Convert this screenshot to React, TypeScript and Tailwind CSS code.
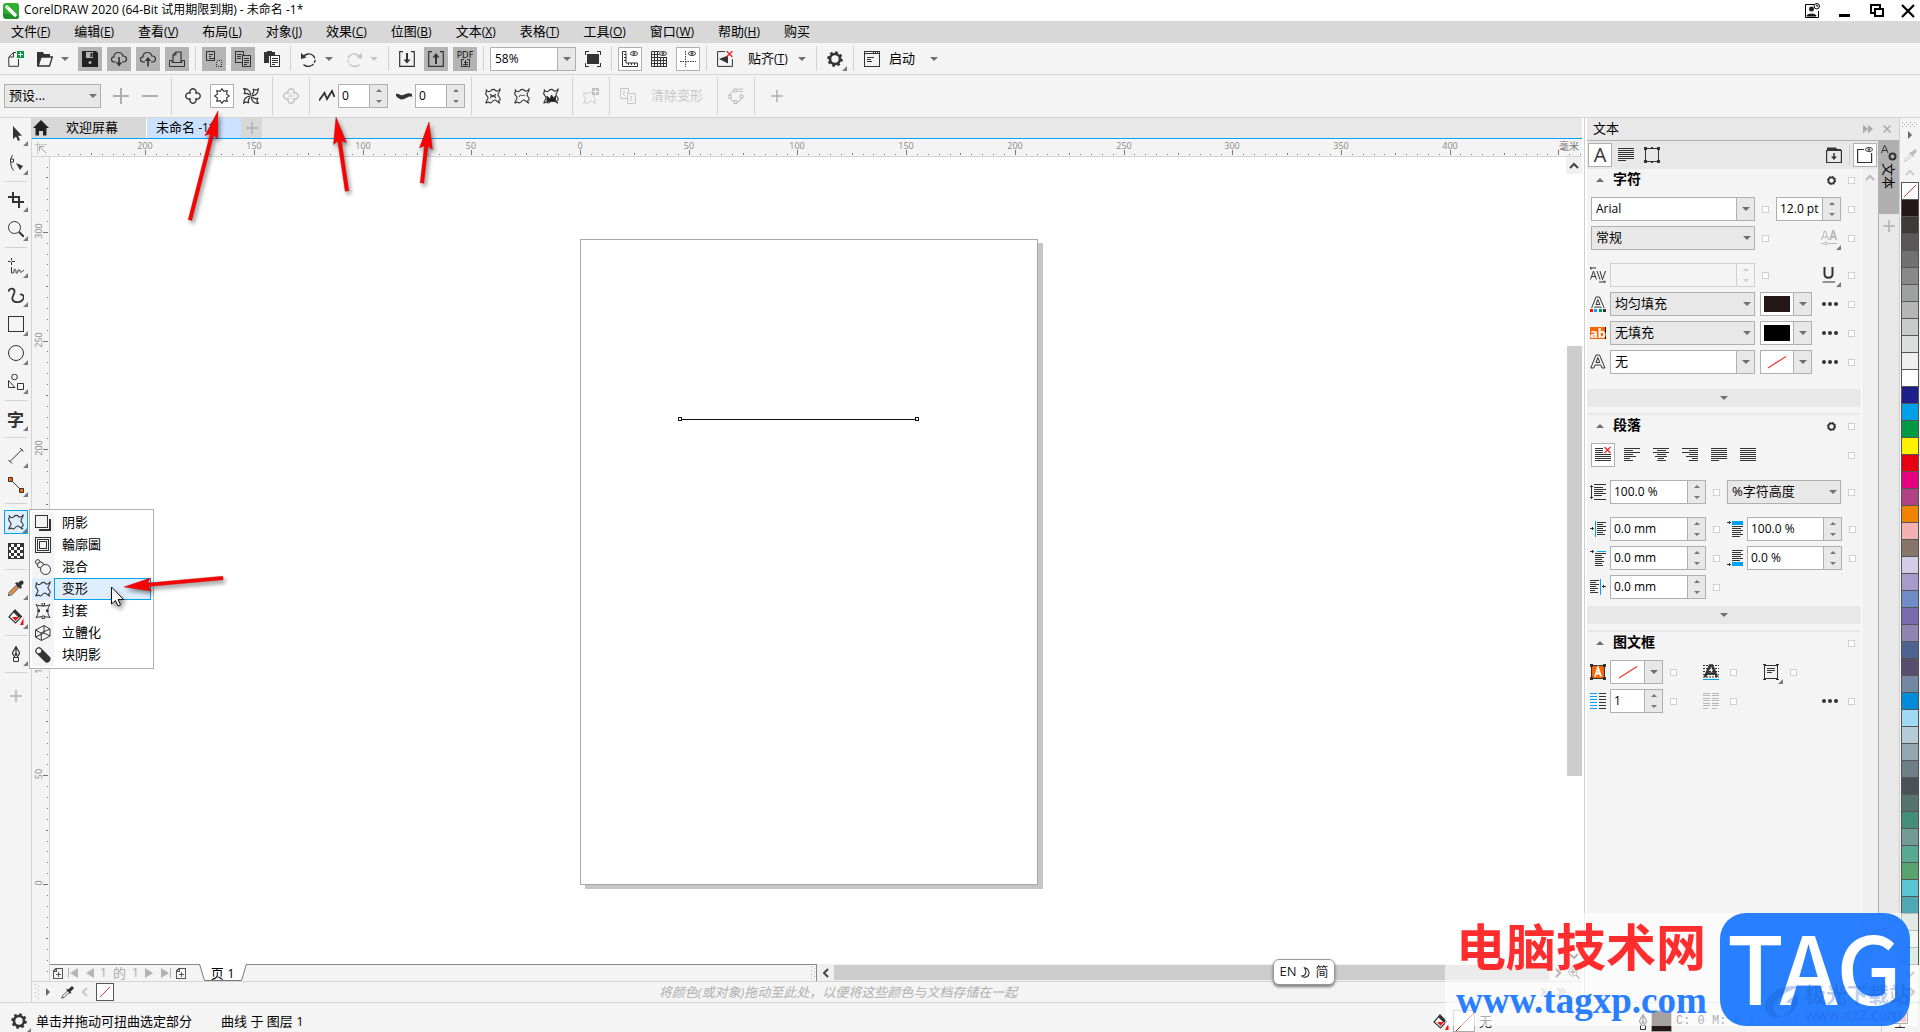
import React from "react";

interface WithChildren {
  children?: React.ReactNode;
}

interface IconProps extends WithChildren {
  size?: number;
  crisp?: boolean;
}

const Icon: React.FC<IconProps> = ({ size = 16, crisp, children }) => (
  <svg
    width={size}
    height={size}
    viewBox="0 0 16 16"
    fill="none"
    stroke="currentColor"
    className="shrink-0"
    shapeRendering={crisp ? "crispEdges" : undefined}
  >
    {children}
  </svg>
);

const BLOB =
  "M1 1.5C2.500 3.500 4.500 4.500 6 2.500 7.500 1 9.500 1 10.500 2.500 12 4 14 2.500 15 1 15.500 3.500 12.500 5 13 7 13.500 9 16 10 15 12 13.500 12 13 14 15 15.200 12.500 15 12 12.500 10 12 7.500 11.500 7.500 15 5.500 15 4 15 4.500 12.800 1 15 .5 13 3.500 11.500 3 9.500 2.500 7.500 .2 7 .8 4.500 2 4 1.500 3 1 1.500Z";

const Caret: React.FC<{ className?: string }> = ({ className = "text-[#6f6f6f]" }) => (
  <svg width="8" height="4" viewBox="0 0 8 4" className={className}>
    <path d="M0 0h8L4 4z" fill="currentColor" />
  </svg>
);

const CornerMark = () => (
  <svg width="5" height="5" viewBox="0 0 5 5" className="absolute right-0 bottom-0">
    <path d="M5 0v5H0z" fill="#7a7a7a" />
  </svg>
);

const Chevron: React.FC<{ d: string; color?: string }> = ({ d, color = "#444" }) => (
  <svg width="10" height="10" viewBox="0 0 10 10" fill="none" stroke={color} strokeWidth="2">
    <path d={d} />
  </svg>
);
const UP = "M1 7l4-4 4 4";
const DOWN = "M1 3l4 4 4-4";
const LEFT = "M7 1L3 5l4 4";
const RIGHT = "M3 1l4 4-4 4";

/* standard bar icons */
const NewIcon = () => (
  <Icon>
    <path d="M8 1.500H5.500L.8 6v9.300h9.700V8" />
    <path d="M5.500 2v4H1" />
    <path d="M9 0h7v7H9z" fill="#009a3d" stroke="none" />
    <path d="M12.500 1v5M10 3.500h5" stroke="#fff" />
  </Icon>
);
const OpenIcon = () => (
  <Icon>
    <path d="M0 15V1h6l1 2h6v3H4L1 15z" fill="#333" stroke="none" />
    <path d="M4 6h11.300L12.500 15H1.200z" fill="#f4f4f4" strokeWidth="1.300" />
  </Icon>
);
const SaveIcon = () => (
  <Icon>
    <path d="M0 0h14l2 2v14H0z" fill="#222" stroke="none" />
    <path d="M4 1h7v6H4z" fill="#b4b4b4" stroke="none" />
    <path d="M8.500 2h2v4h-2z" fill="#222" stroke="none" />
    <circle cx="8" cy="11.500" r="1.500" fill="#b4b4b4" stroke="none" />
  </Icon>
);
const CLOUD =
  "M5 11H3.500C1.500 11 .5 9.800 .5 8.300.5 6.800 1.700 5.800 3 5.800 3 3 5 1.500 7.500 1.500 9.800 1.500 11.500 3 12 5c2-.2 3.500 1 3.500 3s-1.500 3-3 3H11";
const CloudDownIcon = () => (
  <Icon>
    <path d={CLOUD} strokeWidth="1.200" />
    <path d="M8 6v8" strokeWidth="1.600" />
    <path d="M4.800 11.500h6.400L8 15.500z" fill="#333" stroke="none" />
  </Icon>
);
const CloudUpIcon = () => (
  <Icon>
    <path d={CLOUD} strokeWidth="1.200" />
    <path d="M8 8v7.500" strokeWidth="1.600" />
    <path d="M4.800 10h6.400L8 6z" fill="#333" stroke="none" />
  </Icon>
);
const PrintIcon = () => (
  <Icon>
    <path d="M1 9.500h2v2h10v-2h2.500v6H.5v-6z" />
    <path d="M4 11V4l3-3h5v10" strokeWidth="1.200" />
    <path d="M7 1v3H4" />
  </Icon>
);
const CutIcon = () => (
  <Icon crisp>
    <path d="M.5.500h8v9h-8zM2.500 3.500h4M2.500 5.500h2" />
    <path d="M10.500 9.500h5v6h-5z" strokeDasharray="1 1" />
    <path d="M3 7.500h6" />
  </Icon>
);
const CopyIcon = () => (
  <Icon crisp>
    <path d="M.5.500h8v11h-8zM2 3.500h5M2 5.500h4M2 7.500h4" />
    <path d="M7.500 4.500h8v11h-8z" fill="#b4b4b4" />
    <path d="M9 7.500h5M9 9.500h5M9 11.500h5M9 13.500h3" />
  </Icon>
);
const PasteIcon = () => (
  <Icon crisp>
    <path d="M0 1h3V0h5v1h3v4H5v7H0z" fill="#333" stroke="none" />
    <path d="M6.500 4.500h9v11h-9z" fill="#fff" />
    <path d="M8 7.500h6M8 9.500h6M8 11.500h6M8 13.500h3" />
  </Icon>
);
const UNDO_ARC = "M2.500 5.500C5 2.500 9 2 12 4.500c3 3 2.500 7-.5 9.500-3 2-6.500 1.800-9-.5";
const UndoIcon = () => (
  <Icon>
    <path d={UNDO_ARC} strokeWidth="1.400" strokeDasharray="14 1.500 3 1.500" />
    <path d="M0 8V2l5.500 4.500z" fill="currentColor" stroke="none" />
  </Icon>
);
const RedoIcon = () => (
  <Icon>
    <g transform="matrix(-1 0 0 1 16 0)">
      <path d={UNDO_ARC} strokeWidth="1.400" strokeDasharray="14 1.500 3 1.500" />
      <path d="M0 8V2l5.500 4.500z" fill="currentColor" stroke="none" />
    </g>
  </Icon>
);
const ImportIcon = () => (
  <Icon>
    <path d="M4 .7H.7v14.600h14.600V.7H12" strokeWidth="1.200" />
    <path d="M8 2v8" strokeWidth="2" />
    <path d="M4.500 8.500h7L8 12.500z" fill="#333" stroke="none" />
  </Icon>
);
const ExportIcon = () => (
  <Icon>
    <path d="M4 .7H.7v14.600h14.600V.7H12" strokeWidth="1.200" />
    <path d="M8 5v8" strokeWidth="2" />
    <path d="M4.500 6.500h7L8 2z" fill="#333" stroke="none" />
  </Icon>
);
const PdfIcon = () => (
  <span className="flex flex-col items-center text-[9px] leading-[9px] text-black">
    PDF
    <svg width="9" height="8" viewBox="0 0 9 8" fill="none" stroke="#333" shapeRendering="crispEdges">
      <path d="M3 .500H.5v7h8v-7H6M4.500 1v6M2.500 3.500h4M2 5.500h5" />
    </svg>
  </span>
);
const FullScreenIcon = () => (
  <Icon crisp>
    <path d="M2 3h12v10H2z" fill="#333" stroke="none" />
    <path d="M0 .500h4M.5 0v4M12 .500h4M15.500 0v4M0 15.500h4M.5 12v4M12 15.500h4M15.500 12v4" />
  </Icon>
);
const Eye = () => (
  <g strokeWidth="1">
    <ellipse cx="12" cy="2.500" rx="3.600" ry="2" />
    <circle cx="12" cy="2.500" r=".8" fill="currentColor" />
  </g>
);
const RulerIcon = () => (
  <Icon>
    <path d="M.5.500h3.500v11.500h11.500v3.500H.5zM2 3.500h2M2 6.500h2M2 9.500h2M6.500 12v2M9.500 12v2M12.500 12v2" />
    <Eye />
  </Icon>
);
const GridIcon = () => (
  <Icon>
    <path d="M.5.500h8M.5 3.500h8M.5 6.500h15M.5 9.500h15M.5 12.500h15M.5 15.500h15M.5.500v15M3.500.500v15M6.500.500v15M9.500 6v10M12.500 6v10M15.500 6v10" />
    <Eye />
  </Icon>
);
const GuidesIcon = () => (
  <Icon>
    <path d="M0 10.500h16M5.500 0v16" strokeDasharray="1.500 1" />
    <Eye />
  </Icon>
);
const SnapOffIcon = () => (
  <Icon>
    <path d="M8 .6H.6v14.800h14.800V8" />
    <path d="M2 8l9-3.500v8z" fill="#333" stroke="none" />
    <path d="M9.500 0l6 6M15.500 0l-6 6" stroke="#e22" strokeWidth="1.300" />
  </Icon>
);
const GearIcon: React.FC<{ size?: number }> = ({ size = 16 }) => (
  <Icon size={size}>
    <circle cx="8" cy="8" r="5" strokeWidth="2.600" />
    <circle cx="8" cy="8" r="6.700" strokeWidth="2.200" strokeDasharray="2.630 2.630" />
  </Icon>
);
const LaunchIcon = () => (
  <Icon crisp>
    <path d="M.5.500h15v15H.5zM0 2.500h16M3 6.500h7M3 8.500h4M3 10.500h5" />
    <path d="M9 1.500h6" strokeDasharray="1 1" />
  </Icon>
);

/* property bar icons */
const PushPullIcon: React.FC<{ inner?: boolean }> = ({ inner }) => (
  <Icon>
    <path
      d="M5.500 5.500A3 3 0 1 1 10.500 5.500 3 3 0 1 1 10.500 10.500 3 3 0 1 1 5.500 10.500 3 3 0 1 1 5.500 5.500Z"
      strokeWidth="1.300"
    />
    {inner && <path d="M8 5v6M5 8h6" strokeDasharray="1.500 1" />}
  </Icon>
);
const ZipperIcon = () => (
  <Icon>
    <path
      d="M8 .7L9.900 3.400 13.200 2.800 12.600 6.100 15.300 8 12.600 9.900 13.200 13.200 9.900 12.600 8 15.300 6.100 12.600 2.800 13.200 3.400 9.900 .7 8 3.400 6.100 2.800 2.800 6.100 3.400Z"
      strokeWidth="1.100"
    />
  </Icon>
);
const TwisterIcon = () => (
  <Icon>
    {[0, 90, 180, 270].map((a) => (
      <path
        key={a}
        transform={`rotate(${a} 8 8)`}
        d="M7.500 7.500C7.800 3.500 5.500 .8 .8 .7 2.300 2 2.500 3.500 1 6 3 4.800 4.800 5 6.500 7.200"
        strokeWidth="1.200"
      />
    ))}
  </Icon>
);
const AmplitudeIcon = () => (
  <Icon>
    <path d="M0 12.500L5.500 5l2.500 6 5-8 2.500 6" strokeWidth="1.900" />
  </Icon>
);
const FrequencyIcon = () => (
  <Icon>
    <path d="M0 6c3-1 4 2 7 1s5-3 9-1v3c-3-1.500-5 1-8 2S3 11 0 8z" fill="#333" stroke="none" />
  </Icon>
);
const BlobIcon: React.FC<WithChildren> = ({ children }) => (
  <Icon>
    <path d={BLOB} strokeWidth="1.100" />
    {children}
  </Icon>
);
const CopyDistortIcon = () => (
  <Icon>
    <path d="M.5.500h8v10h-8z" />
    <path d="M7.500 5.500h8v10h-8z" fill="#f4f4f4" />
    <path d="M3 3l2 1-2 2 2 2M10 8l2 1-2 2 2 2" />
  </Icon>
);
const ConvertIcon = () => (
  <Icon>
    <path d="M10 2.500A6 6 0 1 0 14 8M10 1h5M11 3.500h4" />
    <path d="M6 1h3v3H6zM0 7h3v3H0zM12 7h3v3h-3zM6 12.500h3v3H6z" fill="#f4f4f4" />
  </Icon>
);

/* toolbox icons */
const Eyedropper = () => (
  <Icon>
    <path d="M9 7l-6.500 6.500" stroke="#f58220" strokeWidth="2.400" />
    <path d="M8 5.500L1 12.500V15h2.500l7-7M1 15l-1 1" />
    <path d="M7 3.500L9 2l5 5-1.500 2z" fill="#333" stroke="none" />
    <path d="M10.500 5.500L13.500 2.500" strokeWidth="4" strokeLinecap="round" />
  </Icon>
);
const SmallEyedropper = () => (
  <Icon size={13}>
    <path d="M1 15l1-3 6-6M1 15l3-1 6-6" />
    <path d="M7 4l5 5" strokeWidth="2" />
    <path d="M10.500 5.500l3-3" strokeWidth="4" strokeLinecap="round" />
  </Icon>
);
const FillIcon = () => (
  <Icon>
    <path d="M7 1l6.500 6.500L7.500 14 1 8z" fill="#fff" strokeWidth="1.200" />
    <path d="M7 1l6.500 6.500-3 1L5 3z" fill="#333" stroke="none" />
    <path d="M4 8h7l-3.500 4zM15.500 9v7H12z" fill="#e11" stroke="none" />
  </Icon>
);
const PenNibIcon = () => (
  <Icon>
    <path d="M8 0v9M8 .5c-1 3-3.500 5-3.500 7L7 11.500h2L11.500 7.500c0-2-2.500-4-3.500-7z" strokeWidth="1.200" />
    <path d="M5.500 11.500h5v4h-5z" />
    <circle cx="8" cy="8.500" r="1" fill="#333" />
  </Icon>
);

interface Tool {
  name: string;
  icon: React.ReactNode;
}

const tools: (Tool | null)[] = [
  { name: "选择", icon: <Icon><path d="M5 0v13l3-2.500 2 4.500 2-1-2-4.300h4z" fill="#333" stroke="none" /></Icon> },
  {
    name: "形状",
    icon: (
      <Icon>
        <path d="M4.500 0C2 4 2 11 5.500 15.500" />
        <path d="M2.500 4h3v3h-3z" fill="#fff" />
        <path d="M8 8l7 3-3 4z" fill="#333" stroke="none" />
      </Icon>
    ),
  },
  null,
  { name: "裁剪", icon: <Icon crisp><path d="M5 0v10h11M0 5h11v11" strokeWidth="2" /></Icon> },
  { name: "缩放", icon: <Icon><circle cx="6.500" cy="6.500" r="6" /><path d="M11 11l5 5" strokeWidth="2" /></Icon> },
  null,
  {
    name: "手绘",
    icon: (
      <Icon>
        <path d="M3.500 0v7M0 3.500h7" strokeDasharray="2.500 1.500 3" />
        <path d="M3.500 9v6c2 0 3 0 2.500-2s2-3 2 .5 2 1 2-.5 2-2 2 0 1.500 1.500 4-1" />
      </Icon>
    ),
  },
  {
    name: "艺术笔",
    icon: <Icon><path d="M.5 4.500C1 1 6 .5 6.500 4S2.500 10 5 13.500c3 3 9 2 10.500-2 1-3-1.500-4.500-3.500-4" strokeWidth="1.800" /></Icon>,
  },
  { name: "矩形", icon: <Icon crisp><path d="M.5.500h15v15H.5z" /></Icon> },
  { name: "椭圆形", icon: <Icon><circle cx="8" cy="8" r="7.500" /></Icon> },
  {
    name: "多边形",
    icon: (
      <Icon>
        <circle cx="6.500" cy="3" r="2.800" />
        <path d="M.5 6.500v7H7z" />
        <path d="M9.500 9.500h6v6h-6z" fill="#f4f4f4" />
      </Icon>
    ),
  },
  null,
  { name: "文本", icon: <span className="text-[17px] leading-none font-bold">字</span> },
  null,
  { name: "平行度量", icon: <Icon><path d="M2 13.500L14 1.500M.5 12l3.500 3.500M12 0l3.500 3.500" /></Icon> },
  {
    name: "连接器",
    icon: (
      <Icon>
        <path d="M2.500 2.500l11 11" />
        <path d="M.5.500h4v4h-4zM11.500 11.500h4v4h-4z" fill="#f60" />
      </Icon>
    ),
  },
  null,
  { name: "变形", icon: <BlobIcon /> },
  {
    name: "透明度",
    icon: (
      <Icon crisp>
        <path d="M.5.500h15v15H.5z" fill="#fff" />
        {[0, 1, 2, 3, 4].map((r) => (
          <path key={r} d={`M${r % 2 ? 3 : 0} ${r * 3 + 2}H16`} strokeWidth="3" strokeDasharray="3 3" />
        ))}
      </Icon>
    ),
  },
  null,
  { name: "颜色滴管", icon: <Eyedropper /> },
  { name: "交互式填充", icon: <FillIcon /> },
  null,
  { name: "轮廓笔", icon: <PenNibIcon /> },
  null,
];

/* layout helpers */
interface ToolButtonProps extends WithChildren {
  label: string;
  state?: "plain" | "dark" | "on";
  className?: string;
}

const ToolButton: React.FC<ToolButtonProps> = ({ label, state = "plain", className = "w-6 text-[#333]", children }) => (
  <button
    aria-label={label}
    className={`relative flex h-6 shrink-0 items-center justify-center ${
      state === "dark" ? "bg-[#b4b4b4]" : state === "on" ? "border border-[#b0b0b0] bg-white" : ""
    } ${className}`}
  >
    {children}
  </button>
);

const SplitButton: React.FC<ToolButtonProps> = ({ label, className = "text-[#333]", children }) => (
  <button aria-label={label} className={`flex h-6 shrink-0 items-center ${className}`}>
    <span className="flex w-6 justify-center">{children}</span>
    <span className="flex w-4 justify-center">
      <Caret className={className === "text-[#333]" ? "text-[#6f6f6f]" : className} />
    </span>
  </button>
);

const Sep = () => <span className="mx-px w-px shrink-0 self-stretch bg-[#d4d4d4]" />;

interface FieldProps {
  label: string;
  value: string;
  width: string;
  disabled?: boolean;
  cjk?: boolean;
}

const Combo: React.FC<FieldProps & { white?: boolean }> = ({ label, value, width, white, cjk }) => (
  <label
    className={`flex h-6 shrink-0 items-center border border-[#b0b0b0] ${width} ${white ? "bg-white" : "bg-[#e8e8e8]"}`}
  >
    <select
      aria-label={label}
      className={`h-full min-w-0 flex-1 appearance-none bg-transparent pl-1 text-black ${cjk ? "text-[13px]" : "text-xs"}`}
    >
      <option>{value}</option>
    </select>
    <span
      className={`flex h-full items-center justify-center ${
        white ? "w-[18px] border-l border-[#b0b0b0] bg-[#e8e8e8]" : "w-[14px]"
      }`}
    >
      <Caret />
    </span>
  </label>
);

const Spinner: React.FC<FieldProps> = ({ label, value, width, disabled }) => (
  <div
    className={`flex h-6 shrink-0 border ${width} ${
      disabled ? "border-[#d0d0d0] bg-[#f4f4f4] text-[#ccc]" : "border-[#b0b0b0] bg-white text-[#777]"
    }`}
  >
    <input
      aria-label={label}
      defaultValue={value}
      disabled={disabled}
      className="w-0 min-w-0 flex-1 bg-transparent pl-[3px] text-xs text-black"
    />
    <span
      className={`flex w-[18px] flex-col border-l ${
        disabled ? "border-[#d0d0d0]" : "border-[#b0b0b0] bg-[#e8e8e8]"
      }`}
    >
      <button aria-label={`${label} +`} className="flex flex-1 items-center justify-center">
        <svg width="6" height="3" viewBox="0 0 6 3"><path d="M0 3h6L3 0z" fill="currentColor" /></svg>
      </button>
      <button aria-label={`${label} -`} className="flex flex-1 items-center justify-center">
        <svg width="6" height="3" viewBox="0 0 6 3"><path d="M0 0h6L3 3z" fill="currentColor" /></svg>
      </button>
    </span>
  </div>
);

const Mark: React.FC<{ label: string }> = ({ label }) => (
  <input
    type="checkbox"
    aria-label={label}
    className="h-[7px] w-[7px] shrink-0 appearance-none border border-[#d0d0d0] bg-white"
  />
);

const Swatch: React.FC<{ label: string; color?: string; width?: string }> = ({ label, color, width = "w-[52px]" }) => (
  <button aria-label={label} className={`flex h-6 shrink-0 border border-[#b0b0b0] bg-white ${width}`}>
    <span className="flex h-full flex-1 items-center justify-center">
      <svg width="26" height="16" viewBox="0 0 26 16">
        {color ? <path d="M0 0h26v16H0z" fill={color} /> : <path d="M4 14L22 2.500" stroke="#e33" strokeWidth="1.200" />}
      </svg>
    </span>
    <span className="flex h-full w-[18px] items-center justify-center border-l border-[#b0b0b0] bg-[#e8e8e8]">
      <Caret />
    </span>
  </button>
);

const More = () => (
  <button aria-label="更多" className="flex h-6 w-[22px] items-center justify-center">
    <svg width="16" height="4" viewBox="0 0 16 4" fill="#333">
      <circle cx="2" cy="2" r="2" />
      <circle cx="8" cy="2" r="2" />
      <circle cx="14" cy="2" r="2" />
    </svg>
  </button>
);

/* rulers: pixels per millimetre at 58% */
const SCALE = 2.174;

interface RulerProps {
  origin: number;
  from: number;
  to: number;
  vertical?: boolean;
}

const Ruler: React.FC<RulerProps> = ({ origin, from, to, vertical }) => {
  const ticks: React.ReactNode[] = [];
  for (let mm = from; mm <= to; mm += 5) {
    const pos = Math.round(origin + (vertical ? -mm : mm) * SCALE);
    const len = mm % 50 === 0 ? 5 : mm % 25 === 0 ? 2 : 1;
    ticks.push(
      vertical ? (
        <path key={mm} d={`M${16 - len} ${pos}.5h${len}`} />
      ) : (
        <path key={mm} d={`M${pos}.5 ${16 - len}v${len}`} />
      )
    );
    if (mm % 50 === 0 && mm !== 450) {
      ticks.push(
        <text
          key={`t${mm}`}
          x={vertical ? 0 : pos}
          y={vertical ? 0 : 10}
          transform={vertical ? `translate(10 ${pos - 1}) rotate(-90)` : undefined}
          textAnchor="middle"
          fontSize="9"
          fill="#888"
          stroke="none"
        >
          {Math.abs(mm)}
        </text>
      );
    }
  }
  return (
    <svg className="absolute inset-0 h-full w-full" fill="none" stroke="#777" shapeRendering="crispEdges">
      {ticks}
    </svg>
  );
};

const menus: [string, string][] = [
  ["文件", "F"], ["编辑", "E"], ["查看", "V"], ["布局", "L"], ["对象", "J"], ["效果", "C"], ["位图", "B"],
  ["文本", "X"], ["表格", "T"], ["工具", "O"], ["窗口", "W"], ["帮助", "H"], ["购买", ""],
];

const TitleBar = () => (
  <header className="flex h-[21px] items-center bg-white pr-1 pl-[3px]">
    <svg width="16" height="16" viewBox="0 0 16 16">
      <rect width="16" height="16" rx="3" fill="#2fae2f" />
      <path d="M0 10c0 4 1 6 5 6h8c2 0 3-1 3-3z" fill="#1d8f28" />
      <path d="M4 4l8 8" stroke="#fff" strokeWidth="3.500" strokeLinecap="round" />
      <path d="M3.500 5l2-2" stroke="#9fd89f" strokeWidth="1" />
    </svg>
    <h1 className="pb-px pl-[5px] text-xs">
      CorelDRAW 2020 (64-Bit 试用期限到期) - 未命名 -1*
    </h1>
    <div className="ml-auto flex items-center gap-4 text-black">
      <button aria-label="帐户">
        <Icon>
          <path d="M10 1.500H1.500v13h13V8" />
          <circle cx="7.500" cy="6" r="2.500" fill="#222" stroke="none" />
          <path d="M3 13c0-2.500 9-2.500 9 0z" fill="#222" />
          <circle cx="12.800" cy="3.200" r="2.700" />
          <path d="M12.800 1.500v1.700h1.500" />
        </Icon>
      </button>
      <button aria-label="最小化"><Icon crisp><path d="M3 12.500h11" strokeWidth="3" /></Icon></button>
      <button aria-label="还原">
        <Icon crisp>
          <path d="M6 10H3V2h9v3" strokeWidth="2" />
          <path d="M7 6h8v7H7z" strokeWidth="2" />
        </Icon>
      </button>
      <button aria-label="关闭"><Icon><path d="M2 2l12 12M14 2L2 14" strokeWidth="2.200" /></Icon></button>
    </div>
  </header>
);

const MenuBar = () => (
  <nav className="flex h-[22px] items-start gap-6 bg-[#d8d8d8] pl-[11px]">
    {menus.map(([name, key]) => (
      <button key={name} className="text-[13px] leading-[20px] whitespace-nowrap">
        {name}
        {key && (
          <span className="text-xs">
            (<u>{key}</u>)
          </span>
        )}
      </button>
    ))}
  </nav>
);

const StandardBar = () => (
  <div className="flex h-8 items-center gap-[5px] border-b border-[#d4d4d4] py-[3px] pl-1">
    <ToolButton label="新建"><NewIcon /></ToolButton>
    <SplitButton label="打开"><OpenIcon /></SplitButton>
    <ToolButton label="保存" state="dark"><SaveIcon /></ToolButton>
    <ToolButton label="从云下载" state="dark"><CloudDownIcon /></ToolButton>
    <ToolButton label="上传到云" state="dark"><CloudUpIcon /></ToolButton>
    <ToolButton label="打印" state="dark"><PrintIcon /></ToolButton>
    <Sep />
    <ToolButton label="剪切" state="dark"><CutIcon /></ToolButton>
    <ToolButton label="复制" state="dark"><CopyIcon /></ToolButton>
    <ToolButton label="粘贴"><PasteIcon /></ToolButton>
    <Sep />
    <SplitButton label="撤消"><UndoIcon /></SplitButton>
    <SplitButton label="重做" className="text-[#c4c4c4]"><RedoIcon /></SplitButton>
    <Sep />
    <ToolButton label="导入"><ImportIcon /></ToolButton>
    <ToolButton label="导出" state="dark"><ExportIcon /></ToolButton>
    <ToolButton label="发布为 PDF" state="dark"><PdfIcon /></ToolButton>
    <Sep />
    <Combo label="缩放级别" value="58%" width="w-[86px]" white />
    <ToolButton label="全屏预览"><FullScreenIcon /></ToolButton>
    <Sep />
    <ToolButton label="显示标尺" state="on"><RulerIcon /></ToolButton>
    <ToolButton label="显示网格"><GridIcon /></ToolButton>
    <ToolButton label="显示辅助线" state="on"><GuidesIcon /></ToolButton>
    <Sep />
    <ToolButton label="关闭贴齐"><SnapOffIcon /></ToolButton>
    <button className="flex h-6 w-[68px] items-center justify-between pr-1 pl-[6px] text-[13px]">
      <span>贴齐<span className="text-xs">(<u>T</u>)</span></span>
      <Caret />
    </button>
    <Sep />
    <ToolButton label="选项"><GearIcon /><CornerMark /></ToolButton>
    <Sep />
    <ToolButton label="应用程序启动器"><LaunchIcon /></ToolButton>
    <button className="flex h-6 w-[53px] items-center justify-between pr-1 text-[13px]">
      启动
      <Caret />
    </button>
  </div>
);

const Plus: React.FC<{ size?: number; minus?: boolean }> = ({ size = 16, minus }) => (
  <svg width={size} height={size} viewBox="0 0 16 16" stroke="#b0b0b0" strokeWidth="2">
    <path d={minus ? "M0 8h16" : "M8 0v16M0 8h16"} />
  </svg>
);

const PropertyBar = () => (
  <div className="flex h-[43px] items-center gap-[5px] border-b border-[#d4d4d4] py-[2px] pl-1">
    <Combo label="预设列表" value="预设..." width="w-[97px]" cjk />
    <div className="flex gap-[5px] px-[3px]">
      <ToolButton label="添加预设"><Plus /></ToolButton>
      <ToolButton label="删除预设"><Plus minus /></ToolButton>
    </div>
    <Sep />
    <div className="flex gap-[5px] px-[3px]">
      <ToolButton label="推拉变形"><PushPullIcon /></ToolButton>
      <ToolButton label="拉链变形" state="on"><ZipperIcon /></ToolButton>
      <ToolButton label="扭曲变形"><TwisterIcon /></ToolButton>
    </div>
    <Sep />
    <ToolButton label="居中变形" className="w-6 text-[#c0c0c0]"><PushPullIcon inner /></ToolButton>
    <Sep />
    <div className="flex">
      <ToolButton label="拉链振幅" className="w-[22px] text-[#333]"><AmplitudeIcon /></ToolButton>
      <Spinner label="振幅" value="0" width="w-[50px]" />
    </div>
    <div className="flex">
      <ToolButton label="拉链频率" className="w-[22px] text-[#333]"><FrequencyIcon /></ToolButton>
      <Spinner label="频率" value="0" width="w-[50px]" />
    </div>
    <Sep />
    <div className="flex gap-[5px] px-[3px]">
      <ToolButton label="随机变形"><BlobIcon><path d="M5 6l3 2-3 2M11 6L8 8l3 2M5 8h6" /></BlobIcon></ToolButton>
      <ToolButton label="平滑变形"><BlobIcon><path d="M5 9c1-3 2-1.500 3-1.500S10 7 11 8" /></BlobIcon></ToolButton>
      <ToolButton label="局限变形">
        <BlobIcon><path d="M4 13.500V8l3 3 1.500-4 2 3 2-2v5.500z" fill="#222" /></BlobIcon>
      </ToolButton>
    </div>
    <Sep />
    <ToolButton label="添加新的变形" className="w-6 text-[#c0c0c0]">
      <Icon>
        <path d={BLOB} transform="translate(0 3) scale(.82)" />
        <path d="M9 0h7v7H9z" fill="#c0c0c0" stroke="none" />
        <path d="M12.500 1v5M10 3.500h5" stroke="#fff" />
      </Icon>
    </ToolButton>
    <Sep />
    <button className="flex h-6 items-center gap-[15px] px-1 text-[13px] text-[#c8c8c8]" disabled>
      <CopyDistortIcon />
      <span className="pr-1">清除变形</span>
    </button>
    <Sep />
    <ToolButton label="转换为曲线" className="w-6 text-[#b8b8b8]"><ConvertIcon /></ToolButton>
    <Sep />
    <div className="pl-1"><ToolButton label="快速自定义"><Plus size={12} /></ToolButton></div>
  </div>
);

const ToolBox = () => (
  <aside className="flex w-8 shrink-0 flex-col items-center gap-[5px] border-r border-[#d4d4d4] pt-1 text-[#333]">
    {tools.map((tool, i) =>
      tool ? (
        <button
          key={tool.name}
          aria-label={tool.name}
          className={`relative flex h-6 w-6 items-center justify-center ${
            tool.name === "变形" ? "border border-[#00a2f2] bg-[#dfeeff]" : ""
          }`}
        >
          {tool.icon}
          {tool.name !== "透明度" && <CornerMark />}
        </button>
      ) : (
        <span key={i} className="my-px h-px w-[22px] bg-[#d4d4d4]" />
      )
    )}
    <button aria-label="自定义工具箱" className="mt-[11px]"><Plus size={12} /></button>
  </aside>
);

const flyout: Tool[] = [
  { name: "阴影", icon: <Icon crisp><path d="M.5.500h12v12H.5z" /><path d="M4 15h11V4" strokeWidth="2" /></Icon> },
  { name: "輪廓圖", icon: <Icon crisp><path d="M.5.500h15v15H.5zM2.500 2.500h11v11h-11zM4.500 4.500h7v7h-7z" /></Icon> },
  {
    name: "混合",
    icon: (
      <Icon>
        <circle cx="2.800" cy="3" r="2.300" />
        <circle cx="5.500" cy="6" r="3" fill="#f4f4f4" />
        <circle cx="10.500" cy="10.500" r="5" fill="#f4f4f4" />
      </Icon>
    ),
  },
  { name: "变形", icon: <BlobIcon /> },
  {
    name: "封套",
    icon: (
      <Icon>
        <path d="M1 1.500c3 2 11 2 14 0-3 4-3 9 0 13-3-1-11-1-14 0 3-4 3-9 0-13z" />
        <path d="M7 0h2.500v2.500H7zM7 13h2.500v2.500H7z" fill="#fff" />
        <path d="M2.500 6.500H5V9H2.500zM11 6.500h2.500V9H11z" fill="#333" stroke="none" />
      </Icon>
    ),
  },
  {
    name: "立體化",
    icon: <Icon><path d="M.5 5L9 .5l6 3.500v7L6.500 15.500.5 12zM.5 5L6 8l9-4M6 8l.5 7.500M9 .5V8l6 3M.5 12L9 8" /></Icon>,
  },
  {
    name: "块阴影",
    icon: (
      <Icon>
        <path d="M4 4l8 8" strokeWidth="7" strokeLinecap="round" />
        <circle cx="3.800" cy="3.800" r="2.900" fill="#fff" />
      </Icon>
    ),
  },
];

const Flyout = () => (
  <ul className="absolute top-[509px] left-[29px] z-20 w-[125px] border border-[#b0b0b0] bg-white p-[2px] text-[#333]">
    {flyout.map(({ name, icon }) => (
      <li key={name}>
        <button className="flex h-[22px] w-full items-stretch text-left">
          <span
            className={`flex w-[22px] items-center justify-center ${name === "变形" ? "bg-[#dfeeff]" : "bg-[#f4f4f4]"}`}
          >
            {icon}
          </span>
          <span
            className={`flex-1 border pl-[7px] text-[13px] leading-[18px] text-black ${
              name === "变形" ? "border-[#00a2f2] bg-[#dfeeff]" : "border-transparent"
            }`}
          >
            {name}
          </span>
        </button>
      </li>
    ))}
  </ul>
);

const DocumentTabs = () => (
  <div className="flex h-[21px] border-b border-[#00a2f2] bg-[#e8e8e8] text-[13px] leading-[18px]">
    <button aria-label="主页" className="flex w-[18px] items-center justify-center bg-[#d8d8d8] text-[#333]">
      <Icon>
        <path d="M8 0l8 8h-2.500v7.500H10V11H6v4.500H2.500V8H0z" fill="#222" stroke="none" />
      </Icon>
    </button>
    <button className="bg-[#d8d8d8] pr-7 pb-[2px] pl-4">欢迎屏幕</button>
    <button className="w-[95px] border-l border-white bg-[#cce0ff] pb-[2px] pl-[9px] text-left">
      未命名<span className="text-xs"> -1*</span>
    </button>
    <button aria-label="新建文档" className="flex w-[21px] items-center justify-center bg-[#d8d8d8]">
      <Plus size={12} />
    </button>
  </div>
);

const PageArt = () => (
  <div className="relative min-w-0 flex-1 overflow-hidden bg-white">
    <div className="absolute top-[82px] left-[530px] h-[646px] w-[458px] border border-[#a8a8a8] bg-white shadow-[5px_4px_0_#c6c6c6]" />
    <svg className="absolute top-[258px] left-[626px]" width="246" height="8" shapeRendering="crispEdges">
      <path d="M4 4.500h238" stroke="#111" />
      <path d="M2.500 2.500h3v3h-3zM239.500 2.500h3v3h-3z" fill="#fff" stroke="#111" />
    </svg>
  </div>
);

const PageIcon = () => (
  <svg width="10" height="11" viewBox="0 0 10 11" fill="none" stroke="#555" shapeRendering="crispEdges">
    <path d="M3 .500h6.500v10h-9V3zM3 .500V3H.5M5.500 4v5M3 6.500h5" />
  </svg>
);

const Triangle: React.FC<{ left?: boolean; bar?: boolean }> = ({ left, bar }) => (
  <svg width="11" height="10" viewBox="0 0 11 10" fill="#b4b4b4">
    <path d={left ? "M10 0v10L2 5z" : "M1 0v10l8-5z"} />
    {bar && <path d={left ? "M0 0h1v10H0z" : "M10 0h1v10h-1z"} />}
  </svg>
);

const PageBar = () => (
  <div className="flex h-[18px] items-stretch border-b border-[#d4d4d4]">
    <div className="flex w-[767px] items-center gap-[5px] border-t border-r border-[#888] pl-[3px] text-xs text-[#aaa]">
      <button aria-label="在前添加页"><PageIcon /></button>
      <button aria-label="第一页"><Triangle left bar /></button>
      <button aria-label="上一页"><Triangle left /></button>
      <span className="flex gap-[6px] leading-4"><span>1</span><span className="text-[13px]">的</span><span>1</span></span>
      <button aria-label="下一页"><Triangle /></button>
      <button aria-label="最后一页"><Triangle bar /></button>
      <button aria-label="在后添加页"><PageIcon /></button>
      <button className="relative ml-2 h-[17px] w-12 text-[13px] leading-[15px] text-black">
        <svg className="absolute -top-px left-0" width="48" height="18" viewBox="0 0 48 18">
          <path d="M0 0h48l-5 16.500H5z" fill="#fff" />
          <path d="M.5 0L5.500 16.500h37L47.500 0" fill="none" stroke="#777" />
        </svg>
        <span className="relative">页 1</span>
      </button>
      <svg className="ml-auto" width="5" height="14" viewBox="0 0 5 14" stroke="#aaa" strokeDasharray="1 3">
        <path d="M.5 0v14M3.500 2v12" />
      </svg>
    </div>
    <div className="flex min-w-0 flex-1 items-center bg-[#efefef]">
      <button aria-label="向左滚动" className="flex w-[17px] justify-center"><Chevron d={LEFT} /></button>
      <span className="h-[15px] flex-1 bg-[#cdcdcd]" />
      <button aria-label="向右滚动" className="flex w-[17px] justify-center"><Chevron d={RIGHT} /></button>
      <button aria-label="导航器" className="flex w-4 justify-center text-[#333]">
        <Icon size={12}><circle cx="6.500" cy="6.500" r="5.500" /><path d="M10.500 10.500l5 5M6.500 3v7M3 6.500h7" strokeWidth="1.500" /></Icon>
      </button>
    </div>
  </div>
);

const DocPalette = () => (
  <div className="flex h-5 items-center gap-[6px] pl-[3px]">
    <svg width="5" height="16" viewBox="0 0 5 16" stroke="#b4b4b4" strokeDasharray="1 3">
      <path d="M.5 0v16M3.500 2v14" />
    </svg>
    <svg width="5" height="8" viewBox="0 0 5 8"><path d="M0 0v8l4-4z" fill="#666" /></svg>
    <button aria-label="滴管" className="pl-1 text-[#333]"><SmallEyedropper /></button>
    <Chevron d={LEFT} color="#c8c8c8" />
    <button aria-label="无颜色" className="h-[18px] w-[18px] border border-[#555] bg-white">
      <svg width="16" height="16"><path d="M3 13L13 3" stroke="#e33" /></svg>
    </button>
    <p className="flex-1 pl-6 text-center text-[13px] leading-5 text-[#b0b0b0] italic">
      将颜色(或对象)拖动至此处，以便将这些颜色与文档存储在一起
    </p>
    <div className="flex gap-2 pr-4">
      <Chevron d={RIGHT} color="#bbb" />
      <Chevron d="M1 1l4 4-4 4M5 1l4 4-4 4" color="#bbb" />
    </div>
  </div>
);

const Workspace = () => (
  <main className="flex min-w-0 flex-1 flex-col">
    <DocumentTabs />
    <div className="flex h-[18px] border-b border-[#d4d4d4]">
      <div className="flex w-[18px] items-center justify-center text-[#888]">
        <Icon size={12}><path d="M0 3.500h16M3.500 0v16" strokeDasharray="1.500 1" /><path d="M6 6l9 9M6 12V6h6" /></Icon>
      </div>
      <div className="relative flex-1">
        <Ruler origin={530} from={-240} to={460} />
        <span className="absolute top-0 right-[3px] text-[10px] leading-[14px] text-[#777]">毫米</span>
      </div>
    </div>
    <div className="flex min-h-0 flex-1">
      <div className="relative w-[18px] shrink-0 border-r border-b border-[#d4d4d4]">
        <Ruler origin={727} from={-40} to={330} vertical />
      </div>
      <div className="flex min-w-0 flex-1 flex-col">
        <div className="flex min-h-0 flex-1">
          <PageArt />
          <div className="flex w-4 flex-col items-center bg-white">
            <button aria-label="向上滚动" className="flex h-[17px] w-full items-center justify-center bg-[#f0f0f0]">
              <Chevron d={UP} />
            </button>
            <span className="grow-[172]" />
            <span className="w-[15px] grow-[430] bg-[#cdcdcd]" />
            <span className="grow-[171]" />
            <button aria-label="向下滚动" className="flex h-[17px] w-full items-center justify-center">
              <Chevron d={DOWN} />
            </button>
          </div>
        </div>
        <PageBar />
      </div>
    </div>
    <DocPalette />
  </main>
);

/* text docker */
const SectionHead: React.FC<{ title: string; gear?: boolean }> = ({ title, gear }) => (
  <div className="flex h-[22px] items-center pr-[6px] pl-[9px] text-[#333]">
    <svg width="8" height="4" viewBox="0 0 8 4"><path d="M0 4h8L4 0z" fill="#6f6f6f" /></svg>
    <h3 className="pb-[2px] pl-[9px] text-sm font-bold text-black">{title}</h3>
    <div className="ml-auto flex items-center gap-3">
      {gear && (
        <button aria-label={`${title}设置`}>
          <Icon size={9}>
            <circle cx="8" cy="8" r="5.500" strokeWidth="3" />
            <circle cx="8" cy="8" r="7" strokeWidth="2" strokeDasharray="2.750 2.750" />
          </Icon>
        </button>
      )}
      <Mark label={title} />
    </div>
  </div>
);

const Row: React.FC<WithChildren> = ({ children }) => (
  <div className="flex h-6 items-center gap-[7px] pr-[6px] pl-[3px] text-[#333]">{children}</div>
);

const Labeled: React.FC<WithChildren & { icon: React.ReactNode }> = ({ icon, children }) => (
  <div className="flex items-center">
    <span className="flex w-5 shrink-0">{icon}</span>
    <div className="flex gap-[5px]">{children}</div>
  </div>
);

const Right: React.FC<WithChildren> = ({ children }) => (
  <div className="ml-auto flex items-center gap-[7px]">{children}</div>
);

const Expander = () => (
  <div className="border-b-2 border-[#e8e8e8] pb-[6px]">
    <button aria-label="展开" className="flex h-[18px] w-full items-center justify-center bg-[#e8e8e8]"><Caret /></button>
  </div>
);

type LineRows = [number, number][];

const Lines: React.FC<WithChildren & { rows: LineRows }> = ({ rows, children }) => (
  <Icon crisp>
    <path d={rows.map(([x, w], i) => `M${x} ${i * 2 + 1}.5h${w}`).join("")} />
    {children}
  </Icon>
);
const FULL: LineRows = [[0, 16], [0, 16], [0, 16], [0, 16], [0, 16], [0, 16], [0, 16]];
const LEFTS: LineRows = [[0, 16], [0, 9], [0, 16], [0, 9], [0, 12], [0, 6], [0, 9]];
const CENTERS: LineRows = [[0, 16], [4, 9], [0, 16], [4, 9], [2, 12], [5, 6], [4, 9]];
const RIGHTS: LineRows = [[0, 16], [7, 9], [0, 16], [7, 9], [4, 12], [10, 6], [7, 9]];
const JUST: LineRows = [[0, 16], [0, 16], [0, 16], [0, 16], [0, 16], [0, 16], [0, 8]];
const INDENT: LineRows = [[7, 9], [7, 6], [7, 9], [7, 6], [7, 9], [7, 6], [7, 8]];
const OUTDENT: LineRows = [[0, 9], [0, 6], [0, 9], [0, 6], [0, 8], [0, 5], [0, 8]];

const OutlineA: React.FC<WithChildren> = ({ children }) => (
  <Icon>
    <path d="M.8 14L6 1h3.500L15 14h-3l-1.200-3H5l-1.200 3zM6 8.500h3.800L7.800 3.500z" />
    {children}
  </Icon>
);

const FrameIcon = () => (
  <Icon crisp>
    <path d="M1.500 1.500h13v13h-13z" />
    <path d="M0 0h3v3H0zM13 0h3v3h-3zM0 13h3v3H0zM13 13h3v3h-3zM7 0h2v2H7zM7 14h2v2H7z" fill="#333" stroke="none" />
  </Icon>
);

const DockerBody = () => (
  <div className="flex w-[291px] shrink-0 flex-col">
    <div className="flex h-7 items-center gap-[2px] bg-[#e8e8e8] px-px text-[#333]">
      <ToolButton label="字符" state="on"><span className="text-[20px] leading-[20px]">A</span></ToolButton>
      <ToolButton label="段落"><Lines rows={JUST} /></ToolButton>
      <ToolButton label="图文框"><FrameIcon /></ToolButton>
      <div className="ml-auto flex h-6 items-center gap-[3px]">
        <ToolButton label="导入样式">
          <Icon>
            <path d="M.6 3.500h14.800v12H.6z" strokeWidth="1.200" />
            <path d="M1 .500h9l1 1.500h4v2H1z" fill="#333" stroke="none" />
            <path d="M8 6v6" strokeWidth="1.500" />
            <path d="M5 9.500h6L8 13z" fill="#333" stroke="none" />
          </Icon>
        </ToolButton>
        <span className="h-5 w-px bg-[#d0d0d0]" />
        <ToolButton label="显示" state="on">
          <Icon><path d="M7 2.500H.6v13h14V6" strokeWidth="1.200" /><Eye /></Icon>
        </ToolButton>
      </div>
    </div>
    <div className="flex min-h-0 flex-1">
      <div className="min-w-0 flex-1">
        <SectionHead title="字符" gear />
        <div className="flex flex-col gap-[5px] pt-[6px]">
          <Row>
            <div className="pl-px"><Combo label="字体" value="Arial" width="w-[164px]" white /></div>
            <Mark label="字体" />
            <Spinner label="字号" value="12.0 pt" width="w-[65px]" />
            <Mark label="字号" />
          </Row>
          <Row>
            <div className="pl-px"><Combo label="字体样式" value="常规" width="w-[164px]" cjk /></div>
            <Mark label="字体样式" />
            <Right>
              <ToolButton label="可变字体" className="w-6 text-[#b8b8b8]">
                <Icon>
                  <path d="M.5 10L3.500 1h1l3 9M1.500 7h5M0 13.500h16" />
                  <path d="M9 10l3-9h.5l3 9M10 7h5" strokeWidth="1.800" />
                  <circle cx="5" cy="13.500" r="1.500" fill="#f4f4f4" />
                </Icon>
                <CornerMark />
              </ToolButton>
              <Mark label="可变字体" />
            </Right>
          </Row>
        </div>
        <div className="flex flex-col gap-[5px] pt-[13px] pb-[15px]">
          <Row>
            <Labeled icon={<Icon><path d="M.5 12.500L3.500 4l3 8.500M1.500 9.500h4M7 4l3 8.500M10 4l2.500 8.500L15.500 4M0 1h6M1.500 0L0 1l1.500 1.500M9 15h6M14 13.500l1.500 1.500-1.500 1" /></Icon>}>
              <Spinner label="字距调整范围" value="" width="w-[145px]" disabled />
            </Labeled>
            <Mark label="字距" />
            <Right>
              <ToolButton label="下划线">
                <Icon><path d="M3.500 0v7c0 5 8 5 8 0V0" strokeWidth="2" /><path d="M1.500 15h12.500" /></Icon>
                <CornerMark />
              </ToolButton>
              <Mark label="下划线" />
            </Right>
          </Row>
          <Row>
            <Labeled
              icon={
                <OutlineA>
                  <path d="M0 12h16v4H0z" fill="#f4f4f4" stroke="none" />
                  <path d="M0 13h3v3H0z" fill="#e11" stroke="none" />
                  <path d="M4 13h3v3H4z" fill="#00a2f2" stroke="none" />
                  <path d="M9 13h3v3H9z" fill="#094" stroke="none" />
                  <path d="M13 13h3v3h-3z" fill="#333" stroke="none" />
                </OutlineA>
              }
            >
              <Combo label="填充类型" value="均匀填充" width="w-[145px]" cjk />
              <Swatch label="文本颜色" color="#231815" />
            </Labeled>
            <Right><More /><Mark label="填充" /></Right>
          </Row>
          <Row>
            <Labeled
              icon={
                <span className="flex h-3 w-4 items-center border-r border-black bg-[#f60] text-[13px] leading-3 font-bold text-white">
                  ab
                </span>
              }
            >
              <Combo label="背景填充类型" value="无填充" width="w-[145px]" cjk />
              <Swatch label="背景颜色" color="#000" />
            </Labeled>
            <Right><More /><Mark label="背景" /></Right>
          </Row>
          <Row>
            <Labeled icon={<OutlineA />}>
              <Combo label="轮廓宽度" value="无" width="w-[145px]" white cjk />
              <Swatch label="轮廓颜色" />
            </Labeled>
            <Right><More /><Mark label="轮廓" /></Right>
          </Row>
        </div>
        <Expander />
        <SectionHead title="段落" gear />
        <div className="flex items-center gap-[5px] pt-[6px] pr-[6px] pb-[13px] pl-1">
          <ToolButton label="无水平对齐" state="on">
            <Lines rows={[[0, 8], [0, 8], [0, 8], [0, 16], [0, 16], [0, 16], [0, 16]]}>
              <path d="M9.500 0l6 6M15.500 0l-6 6" stroke="#e22" strokeWidth="1.300" shapeRendering="auto" />
            </Lines>
          </ToolButton>
          <ToolButton label="左对齐"><Lines rows={LEFTS} /></ToolButton>
          <ToolButton label="中"><Lines rows={CENTERS} /></ToolButton>
          <ToolButton label="右对齐"><Lines rows={RIGHTS} /></ToolButton>
          <ToolButton label="两端对齐"><Lines rows={JUST} /></ToolButton>
          <ToolButton label="强制两端对齐"><Lines rows={FULL} /></ToolButton>
          <Right><Mark label="对齐" /></Right>
        </div>
        <Row>
          <Labeled icon={<Icon crisp><path d="M1.500 1v14M0 2.500h3M0 13.500h3M4 .500h12M4 15.500h12M4 3.500h9M4 5.500h12M4 7.500h9M4 9.500h12M4 11.500h8" /></Icon>}>
            <Spinner label="行间距" value="100.0 %" width="w-24" />
          </Labeled>
          <Mark label="行间距" />
          <Right>
            <Combo label="间距单位" value="%字符高度" width="w-[114px]" cjk />
            <Mark label="间距单位" />
          </Right>
        </Row>
        <div className="flex flex-col gap-[5px] pt-[13px] pb-[7px]">
          <Row>
            <Labeled icon={<Lines rows={INDENT}><path d="M5.500 0v16" stroke="#00a2f2" /><path d="M0 7.500h4M2.500 6v3" /></Lines>}>
              <Spinner label="左行缩进" value="0.0 mm" width="w-24" />
            </Labeled>
            <Mark label="左行缩进" />
            <Right>
              <Labeled icon={<Icon crisp><path d="M5 0h11v4H5z" fill="#00a2f2" stroke="none" /><path d="M0 1.500h4M2.500 0v3M5 5.500h11M5 7.500h9M5 9.500h11M5 11.500h9M5 13.500h11M5 15.500h8" /></Icon>}>
                <Spinner label="段前间距" value="100.0 %" width="w-[95px]" />
              </Labeled>
              <Mark label="段前间距" />
            </Right>
          </Row>
          <Row>
            <Labeled icon={<Icon crisp><path d="M7 1.500h9" stroke="#00a2f2" /><path d="M0 1.500h4M2.500 0v3M5 3.500h11M5 5.500h7M5 7.500h9M5 9.500h7M5 11.500h9M5 13.500h7M5 15.500h8" /></Icon>}>
              <Spinner label="首行缩进" value="0.0 mm" width="w-24" />
            </Labeled>
            <Mark label="首行缩进" />
            <Right>
              <Labeled icon={<Icon crisp><path d="M5 12h11v4H5z" fill="#00a2f2" stroke="none" /><path d="M0 14.500h4M2.500 13v3M5 .500h11M5 2.500h9M5 4.500h11M5 6.500h9M5 8.500h11M5 10.500h8" /></Icon>}>
                <Spinner label="段后间距" value="0.0 %" width="w-[95px]" />
              </Labeled>
              <Mark label="段后间距" />
            </Right>
          </Row>
          <Row>
            <Labeled icon={<Lines rows={OUTDENT}><path d="M10.500 0v16" stroke="#00a2f2" /><path d="M12 7.500h4M13.500 6v3" /></Lines>}>
              <Spinner label="右行缩进" value="0.0 mm" width="w-24" />
            </Labeled>
            <Mark label="右行缩进" />
          </Row>
        </div>
        <Expander />
        <SectionHead title="图文框" />
        <div className="flex flex-col gap-[5px] pt-[6px]">
          <Row>
            <Labeled
              icon={
                <Icon>
                  <path d="M1.500 1.500h13v13h-13z" fill="#f60" />
                  <path d="M0 0h3v3H0zM13 0h3v3h-3zM0 13h3v3H0zM13 13h3v3h-3z" fill="#333" stroke="none" />
                  <path d="M5 12.500l3-9 3 9M6 9.500h4" stroke="#fff" strokeWidth="1.800" />
                </Icon>
              }
            >
              <Swatch label="图文框填充" width="w-[53px]" />
            </Labeled>
            <Mark label="图文框填充" />
            <div className="flex items-center gap-[7px] pl-[15px]">
              <ToolButton label="垂直对齐">
                <Icon>
                  <path d="M0 1.500h16M0 4.500h16M0 7.500h16M0 10.500h16M0 13h16" strokeDasharray="2 1" />
                  <path d="M2 13L7 1.500h2L14 13M4.500 9.500h7" strokeWidth="2.600" />
                  <path d="M0 15.500h16" stroke="#00a2f2" />
                </Icon>
              </ToolButton>
              <Mark label="垂直对齐" />
            </div>
            <div className="flex items-center gap-[7px] pl-[15px]">
              <ToolButton label="文本方向">
                <Icon crisp>
                  <path d="M1.500 1.500h13v13h-13zM4 4.500h8M4 6.500h8M4 8.500h5M0 .500h3M13 .500h3M0 15.500h3M13 15.500h3" />
                </Icon>
                <CornerMark />
              </ToolButton>
              <Mark label="文本方向" />
            </div>
          </Row>
          <Row>
            <Labeled
              icon={
                <Icon crisp>
                  <path d="M0 .500h7M0 3.500h7M0 6.500h7M0 9.500h7M0 12.500h7M0 15.500h7" stroke="#00a2f2" />
                  <path d="M9 .500h7M9 3.500h7M9 6.500h7M9 9.500h7M9 12.500h7M9 15.500h7" />
                </Icon>
              }
            >
              <Spinner label="栏数" value="1" width="w-[53px]" />
            </Labeled>
            <Mark label="栏数" />
            <div className="flex items-center gap-[7px] pl-[15px]">
              <ToolButton label="栏宽" className="w-6 text-[#b8b8b8]">
                <Icon crisp>
                  <path d="M0 .500h7M0 2.500h7M0 5.500h7M0 7.500h7M0 10.500h7M0 12.500h7M0 15.500h5M9 .500h7M9 2.500h7M9 5.500h7M9 7.500h7M9 10.500h7M9 12.500h7M9 15.500h5" />
                </Icon>
              </ToolButton>
              <Mark label="栏宽" />
            </div>
            <Right><More /><Mark label="栏" /></Right>
          </Row>
        </div>
      </div>
      <div className="flex w-[17px] shrink-0 flex-col items-center border-l border-white bg-[#f0f0f0] pt-1">
        <Chevron d={UP} color="#bbb" />
      </div>
    </div>
  </div>
);

const DockerTabs = () => (
  <div className="flex w-[21px] shrink-0 flex-col items-center bg-[#e8e8e8]">
    <button className="flex h-[73px] w-full flex-col items-center gap-[2px] bg-[#b0b0b0] pt-1 text-[#333]">
      <Icon>
        <path d="M.5 8L3.500.500h.5L7 8M1.500 5.500h4.500" />
        <circle cx="11.500" cy="11.500" r="3" strokeWidth="2" />
      </Icon>
      <span className="text-[13px] leading-[18px] text-black [text-orientation:sideways] [writing-mode:vertical-rl]">
        文本
      </span>
    </button>
    <button aria-label="快速自定义泊坞窗" className="flex w-full flex-1 justify-center border-l border-[#b0b0b0] pt-[6px]">
      <Plus size={12} />
    </button>
  </div>
);

const TextDocker = () => (
  <section className="flex shrink-0 flex-col border-r border-[#d0d0d0] bg-[#f4f4f4]">
    <div className="flex h-[23px] items-center border-b border-[#b0b0b0] bg-[#e8e8e8] pr-2 pl-[6px]">
      <h2 className="pb-[2px] text-[13px] leading-5">文本</h2>
      <div className="ml-auto flex items-center gap-[10px] text-[#aaa]">
        <button aria-label="折叠">
          <Icon size={10}><path d="M0 1v14l8-7zM8 1v14l8-7z" fill="#aaa" stroke="none" /></Icon>
        </button>
        <button aria-label="关闭泊坞窗"><Icon size={8}><path d="M1 1l14 14M15 1L1 15" strokeWidth="3" /></Icon></button>
      </div>
    </div>
    <div className="flex min-h-0 flex-1">
      <DockerBody />
      <DockerTabs />
    </div>
  </section>
);

const colors = [
  "#231815", "#3e3a39", "#595757", "#727171", "#898989", "#9fa0a0", "#b5b5b6", "#c9caca", "#dcdddd", "#efefef",
  "#ffffff", "#1d2088", "#00a0e9", "#009944", "#fff100", "#e60012", "#e4007f", "#b04285", "#f08300", "#f4b1b1",
  "#87756b", "#d2cce6", "#a79bcb", "#6f8cc6", "#7a6ab0", "#9284b1", "#4c648f", "#584f6e", "#7488a4", "#008cdb",
  "#9fd9f6", "#b4cbd8", "#95a8b2", "#6e7e87", "#495259", "#55736f", "#458d7b", "#729a97", "#56a993", "#59a36f",
  "#5cc3d2", "#4fa9b5", "#b8cbbd", "#d2e8d6", "#a8d4ac",
];

const ColorPalette = () => (
  <aside className="flex w-5 shrink-0 flex-col items-center bg-[#f4f4f4]">
    <svg width="16" height="6" viewBox="0 0 16 6" className="mt-1" stroke="#aaa" strokeDasharray="1 3">
      <path d="M0 .500h16M2 2.500h14M0 4.500h16" />
    </svg>
    <svg width="4" height="8" viewBox="0 0 4 8" className="mt-[3px]"><path d="M0 0v8l4-4z" fill="#666" /></svg>
    <button aria-label="滴管" className="mt-[10px] text-[#bbb]"><SmallEyedropper /></button>
    <button aria-label="向上" className="mt-[6px] mb-1"><Chevron d={UP} color="#ccc" /></button>
    <div className="border border-b-0 border-[#555]">
      <button aria-label="无填充" className="block h-[17px] w-4 border-b border-[#555] bg-white">
        <svg width="16" height="16"><path d="M2 14L14 2" stroke="#e33" /></svg>
      </button>
      {colors.map((c) => (
        <button key={c} aria-label={c} className="block h-[17px] w-4 border-b border-[#555]" style={{ backgroundColor: c }} />
      ))}
    </div>
    <div className="mt-1"><Chevron d={DOWN} color="#777" /></div>
    <div className="mt-2"><Chevron d="M1 1l4 4-4 4M5 1l4 4-4 4" color="#777" /></div>
  </aside>
);

const StatusBar = () => (
  <footer className="flex h-[30px] shrink-0 items-center overflow-hidden border-t border-[#d4d4d4] pl-[7px] text-[13px]">
    <div className="flex items-center pt-[7px] leading-5">
      <ToolButton label="自定义状态栏"><GearIcon /><CornerMark /></ToolButton>
      <span className="pl-[5px]">单击并拖动可扭曲选定部分</span>
      <span className="pl-[29px]">曲线 于 图层 1</span>
    </div>
    <div className="ml-auto flex h-full items-end text-[#333]">
      <span className="pr-1 pb-[2px]"><FillIcon /></span>
      <svg width="22" height="22" className="border border-[#aaa] bg-white"><path d="M0 22L22 0" stroke="#c22" /></svg>
      <span className="w-[160px] pb-px pl-1">无</span>
      <span className="pb-[2px]"><PenNibIcon /></span>
      <span className="h-[22px] w-[21px] border border-[#aaa] bg-[#231815]" />
      <span className="w-[209px] pb-[3px] pl-1 font-['Liberation_Mono',monospace] text-xs whitespace-pre">
        C: 0 M: 0 Y: 0 K: 100
      </span>
      <span className="border-l border-[#d4d4d4] pr-3 pb-1 pl-[10px]">
        <Icon>
          <path d="M.5.500h15v11H.5zM3 15.500h10M8 12v3" />
          <path d="M2 2h6v8H2z" fill="#5bc0eb" stroke="none" />
          <path d="M8 2h6v8H8z" fill="#e66" stroke="none" />
        </Icon>
      </span>
    </div>
  </footer>
);

/* pointers drawn over the window */
const Arrow: React.FC<{ tip: [number, number]; tail: [number, number] }> = ({ tip, tail }) => {
  const dx = tail[0] - tip[0];
  const dy = tail[1] - tip[1];
  const len = Math.hypot(dx, dy);
  const angle = (Math.atan2(dy, dx) * 180) / Math.PI;
  return (
    <g transform={`translate(${tip[0]} ${tip[1]}) rotate(${angle})`}>
      <path d={`M0 0L27 -6.500L24 -1.800H${len}V1.800H24L27 6.500Z`} fill="#f00" stroke="#b00000" strokeWidth=".4" />
    </g>
  );
};

const Annotations = () => (
  <svg
    className="pointer-events-none absolute top-0 left-0 z-30 drop-shadow-[2px_3px_2px_rgba(0,0,0,0.45)]"
    width="260"
    height="640"
    overflow="visible"
  >
    <Arrow tip={[218, 111]} tail={[190, 220]} />
    <Arrow tip={[336, 117]} tail={[347, 191]} />
    <Arrow tip={[429, 122]} tail={[422, 183]} />
    <Arrow tip={[124, 587]} tail={[223, 578]} />
    <path d="M111.500 587v17l4-3.500 2.500 5.500 2.500-1-2.500-5.500h5.500z" fill="#fff" stroke="#111" />
  </svg>
);

const Watermark = () => (
  <div className="absolute right-[2px] bottom-[6px] z-40 flex h-[113px] items-start justify-between bg-white/60 pr-2 pl-[11px]">
    <div className="flex w-[264px] flex-col whitespace-nowrap">
      <span className="pt-[3px] font-['Noto_Sans_CJK_SC',sans-serif] text-[50px] leading-[56px] font-bold text-[#ff2d2d]">
        电脑技术网
      </span>
      <span className="font-['Liberation_Serif',serif] text-[37px] leading-[58px] font-bold text-[#2a7fff]">
        www.tagxp.com
      </span>
    </div>
    <div className="relative h-[113px] w-[190px] rounded-[26px] bg-[#1d78ff]/95">
      <p className="pl-[7px] font-['Noto_Sans_CJK_SC',sans-serif] text-[93px] leading-[104px] font-medium text-white">TAG</p>
      <div className="absolute right-0 bottom-1 flex items-center gap-1 text-[#1558c0]/30">
        <svg width="38" height="34" viewBox="0 0 38 34" fill="currentColor">
          <path d="M36 2C22-2 2 8 2 22c0 8 8 12 17 10C10 30 8 22 14 15 20 8 30 4 36 2z" />
          <path d="M34 10c4 10-6 22-18 22 8-2 12-6 13-11 0-3-3-4-6-3 2-4 7-7 11-8z" />
        </svg>
        <div>
          <p className="text-[21px] leading-6 font-bold">极光下载站</p>
          <p className="text-[15px] leading-4">www.xz7.com</p>
        </div>
      </div>
    </div>
  </div>
);

const ImeBar = () => (
  <div className="absolute right-[585px] bottom-[47px] z-40 flex h-[26px] w-[62px] items-center justify-center gap-1 rounded-md border border-[#999] bg-white text-[13px] text-[#222] shadow-[0_2px_3px_rgba(0,0,0,0.5)]">
    EN
    <Icon size={11}><path d="M5 1c7 1 10 12 1 14-2 0-4-1-5-2 6 0 8-6 4-12z" strokeWidth="1.500" /></Icon>
    简
  </div>
);

const App = () => {
  return (
    <div className="relative flex h-screen flex-col overflow-hidden bg-[#f4f4f4] font-['Open_Sans','Noto_Sans_CJK_SC',sans-serif] text-black">
      <TitleBar />
      <MenuBar />
      <StandardBar />
      <PropertyBar />
      <div className="flex min-h-0 flex-1">
        <ToolBox />
        <Workspace />
        <div className="flex w-[5px] shrink-0 justify-center bg-white"><span className="w-px bg-[#d0d0d0]" /></div>
        <TextDocker />
        <ColorPalette />
      </div>
      <StatusBar />
      <Flyout />
      <Annotations />
      <ImeBar />
      <Watermark />
    </div>
  );
};

export default App;
